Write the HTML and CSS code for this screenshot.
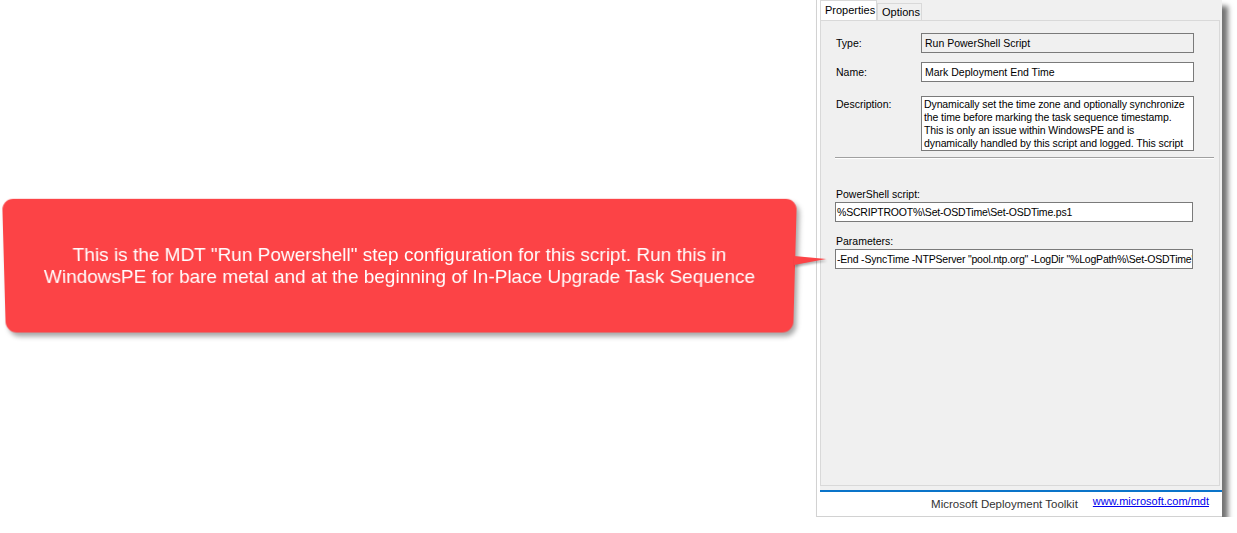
FILE: index.html
```html
<!DOCTYPE html>
<html lang="en">
<head>
    <meta charset="UTF-8">
    <title>MDT Run PowerShell Script step</title>
    <link rel="stylesheet" href="styles.css">
</head>
<body>
    <div class="canvas">
        <div class="callout-area">
            <div class="callout">
                <p>This is the MDT "Run Powershell" step configuration for this script. Run this in<br>WindowsPE for bare metal and at the beginning of In-Place Upgrade Task Sequence</p>
                <svg class="pointer" width="34" height="12" viewBox="0 0 34 12">
                    <polygon points="0,1 32,4 0,10" fill="#fc4346"/>
                </svg>
            </div>
        </div>

        <div class="window">
            <div class="dialog">
                <div class="tabs">
                    <span class="tab active">Properties</span>
                    <span class="tab">Options</span>
                </div>
                <div class="page">
                    <div class="row">
                        <span class="label">Type:</span>
                        <div class="box readonly">Run PowerShell Script</div>
                    </div>
                    <div class="row name-row">
                        <span class="label">Name:</span>
                        <div class="box">Mark Deployment End Time</div>
                    </div>
                    <div class="row desc-row">
                        <span class="label">Description:</span>
                        <div class="box desc">Dynamically set the time zone and optionally synchronize<br>the time before marking the task sequence timestamp.<br>This is only an issue within WindowsPE and is<br>dynamically handled by this script and logged. This script</div>
                    </div>
                    <div class="separator"></div>
                    <div class="field first">
                        <span class="label">PowerShell script:</span>
                        <div class="box wide">%SCRIPTROOT%\Set-OSDTime\Set-OSDTime.ps1</div>
                    </div>
                    <div class="field">
                        <span class="label">Parameters:</span>
                        <div class="box wide">-End -SyncTime -NTPServer "pool.ntp.org" -LogDir "%LogPath%\Set-OSDTime"</div>
                    </div>
                </div>
            </div>
            <div class="footer">
                <span class="brand">Microsoft Deployment Toolkit</span>
                <a href="#">www.microsoft.com/mdt</a>
            </div>
        </div>
    </div>
</body>
</html>
```

FILE: styles.css
```css
body {
    margin: 0;
    background: #fff;
    font-family: "Liberation Sans", Arial, sans-serif;
    overflow: hidden;
}
.canvas {
    display: flex;
    align-items: flex-start;
}
.callout-area {
    width: 816px;
    flex-shrink: 0;
    padding-top: 199px;
    padding-left: 4px;
    box-sizing: border-box;
}
.callout {
    position: relative;
    width: 791px;
    height: 134px;
    background: #fc4346;
    border-radius: 11px;
    box-shadow: 3px 4px 5px rgba(0, 0, 0, 0.35);
    display: flex;
    align-items: center;
    justify-content: center;
    transform: perspective(1000px) rotateX(-4deg);
}
.callout p {
    margin: 0;
    color: #fff;
    font-size: 19px;
    line-height: 22px;
    text-align: center;
}
.pointer {
    position: absolute;
    left: 790px;
    top: 56px;
    filter: drop-shadow(1px 2px 1px rgba(0, 0, 0, 0.3));
}
.window {
    width: 406px;
    height: 517px;
    background: #fff;
    border-left: 1px solid #d2d2d2;
    border-bottom: 1px solid #d2d2d2;
    box-sizing: border-box;
    padding-left: 3px;
    box-shadow: 6px 6px 5px rgba(0, 0, 0, 0.55);
    font-size: 10.5px;
    color: #000;
}
.dialog {
    height: 492px;
    background: #f0f0f0;
    border-bottom: 2px solid #0a74c9;
    box-sizing: border-box;
    display: flex;
    flex-direction: column;
}
.tabs {
    display: flex;
    align-items: flex-end;
    height: 20px;
}
.tab {
    height: 17px;
    padding: 0 4px;
    line-height: 16px;
    border: 1px solid #d9d9d9;
    border-bottom: none;
    box-sizing: border-box;
    width: 45px;
    font-size: 11px;
}
.tab.active {
    height: 20px;
    width: 57px;
    background: #fff;
    line-height: 18px;
    padding-left: 4px;
}
.page {
    height: 466px;
    width: 400px;
    border: 1px solid #d9d9d9;
    box-sizing: border-box;
    padding: 12px 0 0 14px;
}
.row {
    display: flex;
    align-items: center;
}
.row .label {
    width: 85px;
    padding-left: 1px;
}
.name-row {
    margin-top: 9px;
}
.desc-row {
    margin-top: 14px;
    align-items: flex-start;
}
.desc-row .label {
    padding-top: 2px;
}
.box {
    width: 273px;
    height: 20px;
    border: 1px solid #7a7a7a;
    background: #fff;
    box-sizing: border-box;
    padding: 0 3px;
    line-height: 18px;
    white-space: nowrap;
    overflow: hidden;
}
.box.readonly {
    background: #f0f0f0;
}
.box.desc {
    height: 55px;
    line-height: 13px;
    padding-top: 1px;
    padding-left: 2px;
    letter-spacing: -0.1px;
}
.separator {
    width: 379px;
    margin-top: 6px;
    border-top: 1px solid #a0a0a0;
    border-bottom: 1px solid #fff;
}
.field {
    display: flex;
    flex-direction: column;
    gap: 1px;
    margin-top: 13px;
}
.field.first {
    margin-top: 29px;
}
.field .label {
    padding-left: 1px;
    line-height: 13px;
}
.box.wide {
    width: 358px;
    padding: 0 1px;
    letter-spacing: -0.2px;
}
.footer {
    height: 23px;
    display: flex;
    align-items: center;
    justify-content: flex-end;
    gap: 15px;
    padding-right: 13px;
}
.brand {
    font-size: 11.5px;
    color: #333;
}
.footer a {
    color: #0000ee;
    font-size: 11px;
    margin-top: -5px;
}
```
